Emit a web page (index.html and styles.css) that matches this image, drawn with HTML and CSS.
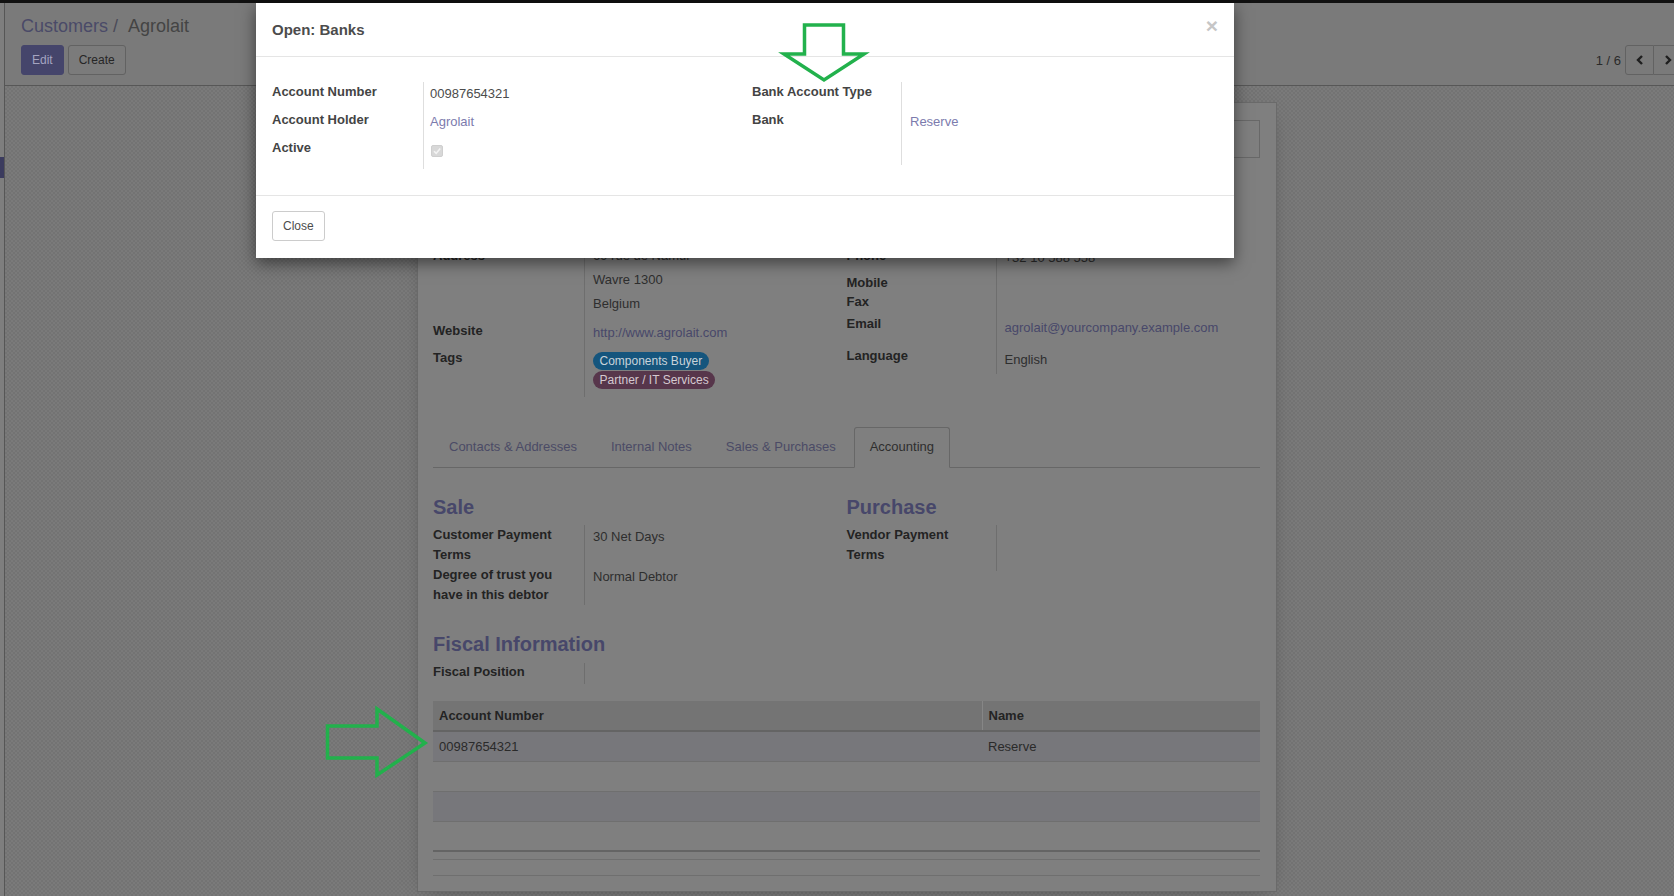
FILE: index.html
```html
<!DOCTYPE html>
<html>
<head>
<meta charset="utf-8">
<title>Customers / Agrolait</title>
<link rel="stylesheet" href="styles.css">
</head>
<body>
<div class="topbar"></div>
<div class="app">
  <div class="rail"><div class="rail-mark"></div></div>
  <div class="main">
    <div class="cp">
      <div class="breadcrumb"><span class="bc-link">Customers</span><span class="bc-sep">/</span><span class="bc-active">Agrolait</span></div>
      <div class="cp-row">
        <div class="cp-buttons">
          <button class="btn btn-primary">Edit</button>
          <button class="btn btn-default">Create</button>
        </div>
        <div class="pager">
          <span class="pager-val">1 / 6</span>
          <div class="pager-btns">
            <button class="pbtn"><svg width="8" height="10" viewBox="0 0 8 10"><polyline points="6,1 2,5 6,9" fill="none" stroke="#1e1e1e" stroke-width="2.4"/></svg></button>
            <button class="pbtn"><svg width="8" height="10" viewBox="0 0 8 10"><polyline points="2,1 6,5 2,9" fill="none" stroke="#1e1e1e" stroke-width="2.4"/></svg></button>
          </div>
        </div>
      </div>
    </div>
    <div class="form-area">
      <div class="sheet">
        <div class="bbox-row"><div class="bbox"></div></div>
        <div class="sheet-spacer"></div>

        <div class="groups">
          <div class="group g-left">
            <div class="frow h74"><div class="flabel lp4">Address</div><div class="fval addr"><div>69 rue de Namur</div><div>Wavre 1300</div><div>Belgium</div></div></div>
            <div class="frow h26"><div class="flabel lp5">Website</div><div class="fval vp7"><span class="link">http://www.agrolait.com</span></div></div>
            <div class="frow h53"><div class="flabel lp6">Tags</div><div class="fval vp8 tags"><span class="tag tag-blue">Components Buyer</span><span class="tag tag-purple">Partner / IT Services</span></div></div>
          </div>
          <div class="group g-right">
            <div class="frow h26"><div class="flabel lp4">Phone</div><div class="fval vp6">+32 10 588 558</div></div>
            <div class="frow h22"><div class="flabel lp5">Mobile</div><div class="fval"></div></div>
            <div class="frow h18"><div class="flabel lp2">Fax</div><div class="fval"></div></div>
            <div class="frow h32"><div class="flabel lp6">Email</div><div class="fval vp10"><span class="link">agrolait@yourcompany.example.com</span></div></div>
            <div class="frow h32"><div class="flabel lp6">Language</div><div class="fval vp10">English</div></div>
          </div>
        </div>

        <ul class="tabs">
          <li class="tab">Contacts &amp; Addresses</li>
          <li class="tab">Internal Notes</li>
          <li class="tab">Sales &amp; Purchases</li>
          <li class="tab active">Accounting</li>
        </ul>

        <div class="groups">
          <div class="group g-left">
            <h2 class="sec-title">Sale</h2>
            <div class="frow h40"><div class="flabel ml">Customer Payment Terms</div><div class="fval vp4">30 Net Days</div></div>
            <div class="frow h40"><div class="flabel ml">Degree of trust you have in this debtor</div><div class="fval vp4">Normal Debtor</div></div>
          </div>
          <div class="group g-right">
            <h2 class="sec-title">Purchase</h2>
            <div class="frow h46"><div class="flabel ml">Vendor Payment Terms</div><div class="fval"></div></div>
          </div>
        </div>

        <h2 class="sec-title fiscal">Fiscal Information</h2>
        <div class="group g-left g-single">
          <div class="frow h21"><div class="flabel lp1">Fiscal Position</div><div class="fval"></div></div>
        </div>

        <table class="list">
          <thead>
            <tr><th class="c-acc">Account Number</th><th class="c-name">Name</th></tr>
          </thead>
          <tbody>
            <tr class="tint"><td>00987654321</td><td class="c-name">Reserve</td></tr>
            <tr><td></td><td></td></tr>
            <tr class="tint"><td></td><td></td></tr>
            <tr><td></td><td></td></tr>
          </tbody>
          <tfoot>
            <tr><td></td><td></td></tr>
          </tfoot>
        </table>
        <div class="list-after"></div>
      </div>
    </div>
  </div>
</div>

<div class="modal">
  <div class="modal-header">
    <h4 class="modal-title">Open: Banks</h4>
    <span class="modal-close">×</span>
  </div>
  <div class="modal-body">
    <div class="mgroup mg-left">
      <div class="mrow h28"><div class="mlabel">Account Number</div><div class="mval vp4">00987654321</div></div>
      <div class="mrow h28"><div class="mlabel">Account Holder</div><div class="mval vp4"><span class="mlink">Agrolait</span></div></div>
      <div class="mrow h31"><div class="mlabel">Active</div><div class="mval"><span class="checkbox"><svg width="10" height="10" viewBox="0 0 10 10"><polyline points="2,5.2 4.2,7.4 8.2,2.6" fill="none" stroke="#f4f4f4" stroke-width="1.6"/></svg></span></div></div>
    </div>
    <div class="mgroup mg-right">
      <div class="mrow h28"><div class="mlabel">Bank Account Type</div><div class="mval"></div></div>
      <div class="mrow h55"><div class="mlabel">Bank</div><div class="mval vp4"><span class="mlink">Reserve</span></div></div>
    </div>
  </div>
  <div class="modal-footer">
    <button class="btn-close">Close</button>
  </div>
</div>

<svg class="annotations" width="1674" height="896" viewBox="0 0 1674 896">
  <polygon points="804.5,25 843.5,25 843.5,54 864,54 824,80 784,54 804.5,54" fill="none" stroke="#22b14c" stroke-width="3.5" stroke-linejoin="miter"/>
  <polygon points="327.5,726 377,726 377,709 425,743 377,775 377,758 327.5,758" fill="none" stroke="#22b14c" stroke-width="3.5" stroke-linejoin="miter"/>
</svg>
</body>
</html>
```

FILE: styles.css
```css
* { box-sizing: border-box; }
html, body { margin: 0; padding: 0; }
body {
  width: 1674px;
  height: 896px;
  overflow: hidden;
  font-family: "Liberation Sans", Arial, Helvetica, sans-serif;
  font-size: 13px;
  color: #2e2e2e;
  background: #777;
  position: relative;
}
button { font-family: inherit; }

.topbar { height: 3px; background: #111; }

.app { display: flex; height: 893px; }

.rail {
  width: 5px;
  flex: none;
  background: #7e7e7e;
  border-right: 1px solid #565656;
  padding-top: 154px;
}
.rail-mark { width: 4px; height: 21px; background: #3b3b5e; }

.main { flex: 1; display: flex; flex-direction: column; min-width: 0; }

/* control panel */
.cp {
  background: #7a7a7a;
  border-bottom: 1px solid #575757;
  padding: 12px 0 10px 16px;
  overflow: hidden;
}
.breadcrumb { font-size: 18px; line-height: 22px; height: 22px; }
.bc-link { color: #4a4a68; }
.bc-sep { color: #4a4a58; padding: 0 10px 0 5px; }
.bc-active { color: #444; }
.cp-row { display: flex; justify-content: space-between; align-items: center; margin-top: 8px; }
.cp-buttons { display: flex; gap: 4px; }
.btn {
  height: 30px;
  padding: 5px 10px;
  font-size: 12px;
  line-height: 18px;
  border-radius: 3px;
}
.btn-primary { background: #45456b; border: 1px solid #45456b; color: #a4a4c0; }
.btn-default { background: #7b7b7b; border: 1px solid #626262; color: #262626; }

.pager { display: flex; align-items: center; margin-right: -9px; }
.pager-val { color: #2a2a2a; font-size: 13px; margin-right: 4px; }
.pager-btns { display: flex; }
.pbtn {
  width: 29px; height: 30px;
  background: #7a7a7a;
  border: 1px solid #626262;
  display: flex; align-items: center; justify-content: center;
  padding: 0;
}
.pbtn:first-child { border-radius: 3px 0 0 3px; }
.pbtn + .pbtn { border-left: none; }

/* form area */
.form-area {
  flex: 1;
  display: flex;
  justify-content: center;
  align-items: flex-start;
  padding: 16px 0 0 15px;
  background: repeating-conic-gradient(#737373 0 25%, #7a7a7a 0 50%) 0 0 / 4px 4px;
}
.sheet {
  width: 860px;
  background: #7f7f7f;
  border: 1px solid #6a6a6a;
  box-shadow: 0 5px 20px -12px rgba(0,0,0,0.6);
  padding: 17px 16px 15px 15px;
}
.bbox-row { display: flex; justify-content: flex-end; }
.bbox { width: 132px; height: 38px; border: 1px solid #686868; }
.sheet-spacer { height: 86px; }

.groups { display: grid; grid-template-columns: 1fr 1fr; }
.group .frow { display: grid; }
.g-left .frow { grid-template-columns: 152px 1fr; }
.g-right .frow { grid-template-columns: 150px 1fr; }
.flabel {
  border-right: 1px solid #6e6e6e;
  font-weight: bold;
  color: #232323;
  line-height: 15px;
  padding-right: 6px;
}
.fval { padding-left: 8px; line-height: 15px; color: #2e2e2e; }
.addr div { line-height: 24px; }
.link { color: #48486a; }

.h18 { height: 18px; } .h21 { height: 21px; } .h22 { height: 22px; }
.h26 { height: 26px; } .h28 { height: 28px; } .h31 { height: 31px; }
.h32 { height: 32px; } .h40 { height: 40px; } .h46 { height: 46px; }
.h53 { height: 53px; } .h55 { height: 55px; } .h74 { height: 74px; }
.lp1 { padding-top: 1px; } .lp2 { padding-top: 2px; } .lp4 { padding-top: 4px; }
.lp5 { padding-top: 5px; } .lp6 { padding-top: 6px; }
.vp4 { padding-top: 4px; } .vp6 { padding-top: 6px; } .vp7 { padding-top: 7px; }
.vp8 { padding-top: 8px; } .vp10 { padding-top: 10px; }
.ml { line-height: 19.5px; padding-top: 0; }

.tags { display: flex; flex-direction: column; align-items: flex-start; gap: 1px; }
.tag {
  font-size: 12px;
  line-height: 18px;
  height: 18px;
  padding: 0 6.5px;
  border-radius: 9px;
}
.tag-blue { background: #15557d; color: #c9d3da; }
.tag-purple { background: #57364b; color: #d5c9d0; }

/* tabs */
.tabs {
  list-style: none;
  margin: 30px 0 0 0;
  padding: 0;
  display: flex;
  border-bottom: 1px solid #676767;
}
.tab {
  padding: 10px 15px 12px;
  line-height: 17px;
  margin-right: 2px;
  margin-bottom: -1px;
  border: 1px solid transparent;
  border-radius: 3px 3px 0 0;
  color: #4b4b66;
}
.tab.active { border-color: #676767; border-bottom-color: #7f7f7f; color: #2e2e2e; }

.sec-title {
  margin: 27px 0 6px 0;
  font-size: 20px;
  line-height: 24px;
  font-weight: bold;
  color: #47476a;
}
.sec-title.fiscal { margin-bottom: 7px; }
.g-single { width: 413px; }

/* list */
.list {
  width: 100%;
  border-collapse: collapse;
  margin-top: 17px;
  table-layout: fixed;
}
.list th, .list td { padding: 0 6px; text-align: left; }
.list th {
  height: 30px;
  background: #747474;
  font-weight: bold;
  color: #232323;
  border-bottom: 2px solid #646464;
}
.c-acc { width: 549px; }
th.c-name { border-left: 1px solid #868686; }
.list tbody td { height: 30px; border-bottom: 1px solid #6f6f6f; color: #2a2a2a; }
.list tbody tr.tint td { background: #77777b; }
.list tfoot td { height: 8px; border-top: 2px solid #646464; border-bottom: 1px solid #6f6f6f; padding: 0; }
.list-after { height: 16px; border-bottom: 1px solid #6f6f6f; }

/* modal */
.modal {
  position: absolute;
  left: 256px;
  top: 3px;
  width: 978px;
  background: #fff;
  box-shadow: 0 5px 15px rgba(0,0,0,0.5);
}
.modal-header {
  position: relative;
  padding: 18px 16px 17px 16px;
  border-bottom: 1px solid #e5e5e5;
}
.modal-title {
  margin: 0;
  font-size: 15px;
  line-height: 18px;
  font-weight: bold;
  color: #4c4c4c;
}
.modal-close {
  position: absolute;
  right: 16px;
  top: 12px;
  font-size: 21px;
  line-height: 21px;
  font-weight: bold;
  color: #c6c6c6;
}
.modal-body {
  display: grid;
  grid-template-columns: 480px 1fr;
  padding: 25px 16px 26px;
}
.mgroup .mrow { display: grid; }
.mg-left .mrow { grid-template-columns: 152px 1fr; }
.mg-right .mrow { grid-template-columns: 150px 1fr; }
.mlabel {
  border-right: 1px solid #dedede;
  font-weight: bold;
  color: #444;
  line-height: 15px;
  padding-top: 2px;
}
.mval { line-height: 15px; color: #4c4c4c; padding-left: 6px; }
.mg-right .mval { padding-left: 8px; }
.mlink { color: #7c7bad; }
.checkbox {
  display: inline-flex;
  align-items: center;
  justify-content: center;
  width: 12px;
  height: 12px;
  margin: 7px 0 0 1px;
  background: #d8d8d8;
  border: 1px solid #cfcfcf;
  border-radius: 2px;
}
.modal-footer {
  border-top: 1px solid #e5e5e5;
  padding: 15px 16px 17px;
}
.btn-close {
  height: 30px;
  padding: 5px 10px;
  font-size: 12px;
  line-height: 18px;
  background: #fff;
  color: #4c4c4c;
  border: 1px solid #cccccc;
  border-radius: 3px;
}

.annotations {
  position: absolute;
  left: 0;
  top: 0;
  pointer-events: none;
}
```
